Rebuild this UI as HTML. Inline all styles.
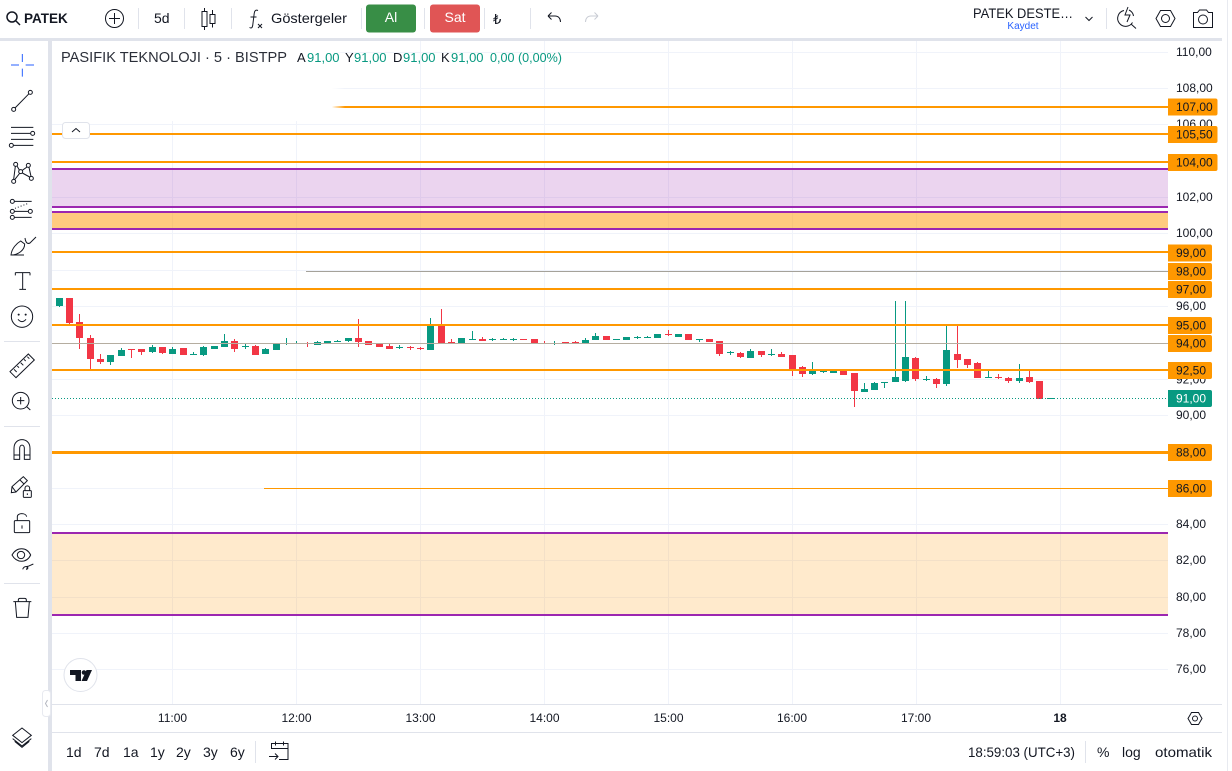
<!DOCTYPE html>
<html><head><meta charset="utf-8"><style>
html,body{margin:0;padding:0;background:#fff;width:1232px;height:771px;overflow:hidden}
svg{position:absolute;left:0;top:0;display:block}
text{font-family:"Liberation Sans",sans-serif;fill:#131722;font-size:12px}
.ax text{font-size:12px}
.gb{stroke:#089981;stroke-width:21;fill:none}
.gw{stroke:#089981;stroke-width:3;fill:none}
.rb{stroke:#f23645;stroke-width:21;fill:none}
.rw{stroke:#f23645;stroke-width:3;fill:none}
.ic{fill:none;stroke:#131722;stroke-width:3}
.i1{fill:none;stroke:#131722;stroke-width:1}
</style></head><body>
<svg width="1232" height="771" viewBox="0 0 1232 771">
<rect width="1232" height="771" fill="#fff"/>
<!-- bands -->
<rect x="0" y="38" width="1222" height="3" fill="#e0e3eb"/>
<rect x="48" y="41" width="4" height="730" fill="#e0e3eb"/>
<rect x="1227" y="0" width="1" height="771" fill="#e8eaf0"/>

<!-- chart grid -->
<g shape-rendering="crispEdges" fill="#f0f3fa">
<rect x="172" y="41" width="1" height="663"/><rect x="296" y="41" width="1" height="663"/><rect x="420" y="41" width="1" height="663"/><rect x="544" y="41" width="1" height="663"/><rect x="668" y="41" width="1" height="663"/><rect x="792" y="41" width="1" height="663"/><rect x="916" y="41" width="1" height="663"/><rect x="1060" y="41" width="1" height="663"/>
<rect x="52" y="52" width="1116" height="1"/><rect x="52" y="88" width="1116" height="1"/><rect x="52" y="124" width="1116" height="1"/><rect x="52" y="161" width="1116" height="1"/><rect x="52" y="197" width="1116" height="1"/><rect x="52" y="233" width="1116" height="1"/><rect x="52" y="270" width="1116" height="1"/><rect x="52" y="306" width="1116" height="1"/><rect x="52" y="343" width="1116" height="1"/><rect x="52" y="379" width="1116" height="1"/><rect x="52" y="415" width="1116" height="1"/><rect x="52" y="452" width="1116" height="1"/><rect x="52" y="488" width="1116" height="1"/><rect x="52" y="524" width="1116" height="1"/><rect x="52" y="560" width="1116" height="1"/><rect x="52" y="597" width="1116" height="1"/><rect x="52" y="633" width="1116" height="1"/><rect x="52" y="669" width="1116" height="1"/>
</g>
<!-- zones -->
<g shape-rendering="crispEdges">
<rect x="52" y="169" width="1116" height="38" fill="#9c27b0" fill-opacity=".2"/>
<rect x="52" y="212" width="1116" height="17" fill="#ff9800" fill-opacity=".5"/>
<rect x="52" y="533" width="1116" height="82" fill="#ff9800" fill-opacity=".2"/>
</g>

<!-- candles -->
<g shape-rendering="crispEdges">
<g transform="translate(50,290) scale(.33333)">
<path class="gw" d="M28.5 24V51M181.5 216V225M214.5 174V180M307.5 165V189M367.5 171V177M430.5 186V192M460.5 168V198M523.5 132V153M586.5 159V177M646.5 174V177M709.5 144V165M739.5 153V159M802.5 153V156M862.5 150V153"/>
<path class="gb" d="M28.5 24V48M181.5 195V216M214.5 180V198M307.5 171V186M367.5 177V192M430.5 192V195M460.5 171V195M493.5 168V177M523.5 153V171M586.5 168V171M646.5 177V192M679.5 159V180M709.5 159V162M739.5 159V162M802.5 156V165M832.5 153V162M862.5 153V156"/>
<path class="rw" d="M58.5 99V102M88.5 72V177M121.5 135V240M151.5 192V222M244.5 177V204M274.5 186V195M337.5 189V192M553.5 147V186M616.5 165V168M772.5 156V171"/>
<path class="rb" d="M58.5 24V99M88.5 96V144M121.5 144V207M151.5 207V216M244.5 177V180M274.5 177V186M337.5 171V189M400.5 174V195M553.5 153V177M616.5 168V195M772.5 159V162"/>
</g>
<g transform="translate(340,290) scale(.33333)">
<path class="gw" d="M25.5 144V156M178.5 165V177M271.5 84V180M397.5 123V150M457.5 144V153M490.5 144V150M520.5 144V153M643.5 153V165M736.5 144V162M766.5 129V150"/>
<path class="gb" d="M25.5 144V153M178.5 171V174M271.5 105V180M364.5 144V162M397.5 147V150M457.5 147V150M490.5 147V150M520.5 147V150M643.5 159V162M736.5 150V162M766.5 138V150M829.5 147V150M859.5 141V150"/>
<path class="rw" d="M55.5 87V171M148.5 162V177M211.5 168V180M241.5 171V180M304.5 57V162M334.5 147V162M427.5 141V153M613.5 153V162M676.5 156V162M706.5 153V162"/>
<path class="rb" d="M55.5 144V156M85.5 153V165M118.5 159V171M148.5 168V177M211.5 171V174M241.5 174V177M304.5 108V162M334.5 156V159M427.5 147V153M550.5 147V150M583.5 147V162M613.5 159V162M676.5 156V159M706.5 156V159M799.5 138V150"/>
</g>
<g transform="translate(630,290) scale(.33333)">
<path class="gw" d="M22.5 138V147M52.5 138V144M208.5 147V156M301.5 183V195M361.5 177V204M424.5 177V198M547.5 216V255M580.5 240V249M610.5 237V249"/>
<path class="gb" d="M22.5 141V144M52.5 141V144M82.5 132V144M145.5 132V141M208.5 147V150M301.5 186V189M361.5 183V204M424.5 192V195M547.5 240V252M580.5 243V246M610.5 240V249"/>
<path class="rw" d="M115.5 120V138M268.5 153V198M331.5 186V204M394.5 183V201M454.5 186V201M487.5 195V258M517.5 228V261M640.5 237V255M673.5 249V351"/>
<path class="rb" d="M115.5 132V135M175.5 132V150M238.5 147V156M268.5 153V192M331.5 189V201M394.5 183V195M454.5 192V201M487.5 195V237M517.5 231V252M640.5 240V255M673.5 249V303"/>
</g>
<g transform="translate(850,290) scale(.33333)">
<path class="gw" d="M43.5 279V306M73.5 276V300M103.5 276V294M136.5 33V276M166.5 33V276M229.5 258V273M289.5 105V288M415.5 243V264M508.5 222V279"/>
<path class="gb" d="M43.5 297V306M73.5 279V300M103.5 276V279M136.5 261V276M166.5 201V273M229.5 267V270M289.5 180V282M415.5 261V264M508.5 264V273M601.5 324V327"/>
<path class="rw" d="M13.5 249V351M196.5 201V273M259.5 264V294M322.5 105V234M352.5 207V234M382.5 216V264M445.5 252V267M475.5 261V279M538.5 237V279"/>
<path class="rb" d="M13.5 249V303M196.5 204V267M259.5 267V282M322.5 192V210M352.5 207V225M382.5 219V264M445.5 261V264M475.5 264V273M538.5 261V276M568.5 273V327"/>
</g>
</g>

<!-- horizontal lines -->
<defs><linearGradient id="fade" x1="0" x2="1" y1="0" y2="0"><stop offset="0" stop-color="#fff" stop-opacity="1"/><stop offset=".955" stop-color="#fff" stop-opacity="1"/><stop offset="1" stop-color="#fff" stop-opacity="0"/></linearGradient></defs>
<g shape-rendering="crispEdges">
<rect x="300" y="106" width="868" height="2" fill="#ff9800"/>
<rect x="52" y="133" width="1116" height="2" fill="#ff9800"/>
<rect x="52" y="161" width="1116" height="2" fill="#ff9800"/>
<rect x="52" y="168" width="1116" height="2" fill="#9c27b0"/>
<rect x="52" y="206" width="1116" height="2" fill="#9c27b0"/>
<rect x="52" y="211" width="1116" height="2" fill="#9c27b0"/>
<rect x="52" y="228" width="1116" height="2" fill="#9c27b0"/>
<rect x="52" y="251" width="1116" height="2" fill="#ff9800"/>
<rect x="306" y="271" width="862" height="1" fill="#a5a29a"/>
<rect x="52" y="288" width="1116" height="2" fill="#ff9800"/>
<rect x="52" y="324" width="1116" height="2" fill="#ff9800"/>
<rect x="52" y="343" width="1116" height="1" fill="#b5ada0"/>
<rect x="52" y="369" width="1116" height="2" fill="#ff9800"/>
<rect x="52" y="451" width="1116" height="3" fill="#ff9800"/>
<rect x="264" y="488" width="904" height="1" fill="#ff9800"/>
<rect x="52" y="532" width="1116" height="2" fill="#9c27b0"/>
<rect x="52" y="614" width="1116" height="2" fill="#9c27b0"/>
</g>
<path d="M52 398.5H1168" stroke="#089981" stroke-width="1" stroke-dasharray="1 2" fill="none"/>

<!-- legend fade overlay -->
<rect x="52" y="41" width="293" height="80" fill="url(#fade)"/>

<!-- legend -->
<text x="61" y="62" style="font-size:15px" fill-opacity=".9" textLength="226" lengthAdjust="spacingAndGlyphs">PASIFIK TEKNOLOJI · 5 · BISTPP</text>
<text x="297" y="62" style="font-size:13px">A</text><text x="307" y="62" style="font-size:13px;fill:#089981">91,00</text>
<text x="345" y="62" style="font-size:13px">Y</text><text x="354" y="62" style="font-size:13px;fill:#089981">91,00</text>
<text x="393" y="62" style="font-size:13px">D</text><text x="403" y="62" style="font-size:13px;fill:#089981">91,00</text>
<text x="441" y="62" style="font-size:13px">K</text><text x="451" y="62" style="font-size:13px;fill:#089981">91,00</text>
<text x="490" y="62" style="font-size:13px;fill:#089981" textLength="72" lengthAdjust="spacingAndGlyphs">0,00 (0,00%)</text>
<!-- collapse button -->
<rect x="62.5" y="122.5" width="27" height="16" rx="3" fill="#fff" stroke="#e0e3eb"/>
<path d="M72 132l4-3.500 4 3.500" fill="none" stroke="#131722" stroke-width="1"/>

<!-- price axis text -->
<g class="ax">
<text x="1176" y="56">110,00</text><text x="1176" y="92">108,00</text><text x="1176" y="128">106,00</text><text x="1176" y="201">102,00</text><text x="1176" y="237">100,00</text><text x="1176" y="310">96,00</text><text x="1176" y="383.500">92,00</text><text x="1176" y="419">90,00</text><text x="1176" y="528">84,00</text><text x="1176" y="564">82,00</text><text x="1176" y="601">80,00</text><text x="1176" y="637">78,00</text><text x="1176" y="673">76,00</text>
</g>
<!-- price labels -->
<g fill="#ff9800">
<path d="M1168 98.500h47.500q2 0 2 2v13q0 2-2 2h-47.500zM1168 126h47.500q2 0 2 2v13q0 2-2 2h-47.500zM1168 154h47.500q2 0 2 2v13q0 2-2 2h-47.500z"/>
<path d="M1168 244.500h42q2 0 2 2v13q0 2-2 2h-42zM1168 263h42q2 0 2 2v13q0 2-2 2h-42zM1168 281h42q2 0 2 2v13q0 2-2 2h-42zM1168 317h42q2 0 2 2v13q0 2-2 2h-42zM1168 335h42q2 0 2 2v13q0 2-2 2h-42zM1168 362h42q2 0 2 2v13q0 2-2 2h-42zM1168 444h42q2 0 2 2v13q0 2-2 2h-42zM1168 480h42q2 0 2 2v13q0 2-2 2h-42z"/>
<path d="M1168 390h42q2 0 2 2v13q0 2-2 2h-42z" fill="#089981"/>
</g>
<g class="ax">
<text x="1176" y="111">107,00</text><text x="1176" y="138.500">105,50</text><text x="1176" y="166.500">104,00</text><text x="1176" y="257">99,00</text><text x="1176" y="275.500">98,00</text><text x="1176" y="293.500">97,00</text><text x="1176" y="329.500">95,00</text><text x="1176" y="347.500">94,00</text><text x="1176" y="374.500">92,50</text><text x="1176" y="456.500">88,00</text><text x="1176" y="492.500">86,00</text>
<text x="1176" y="402.500" style="fill:#fff">91,00</text>
</g>

<!-- tv logo -->
<circle cx="80.500" cy="675" r="16.500" fill="#fff" stroke="#e0e3eb"/>
<path d="M70 670h11v11h-5.500v-6h-5.500zM92 670l-5 11h-5.500l5-11z" fill="#131722"/>
<circle cx="84" cy="672.500" r="2.300" fill="#131722"/>

<!-- time axis -->
<g shape-rendering="crispEdges" fill="#e0e3eb">
<rect x="52" y="704" width="1170" height="1"/><rect x="52" y="732" width="1170" height="1"/>
<rect x="255" y="741" width="1" height="22"/><rect x="1085" y="741" width="1" height="22"/>
</g>
<g text-anchor="middle">
<text x="172.500" y="722">11:00</text><text x="296.500" y="722">12:00</text><text x="420.500" y="722">13:00</text><text x="544.500" y="722">14:00</text><text x="668.500" y="722">15:00</text><text x="792" y="722">16:00</text><text x="916" y="722">17:00</text><text x="1060" y="722" style="font-weight:bold">18</text>
</g>
<path d="M1188 718.500l3.500-6h7l3.500 6-3.500 6h-7z" class="i1"/><circle cx="1195" cy="718.500" r="2.500" class="i1"/>

<!-- bottom bar -->
<text x="66" y="757" style="font-size:14px">1d</text><text x="94" y="757" style="font-size:14px">7d</text><text x="123" y="757" style="font-size:14px">1a</text><text x="150" y="757" style="font-size:14px">1y</text><text x="176" y="757" style="font-size:14px">2y</text><text x="203" y="757" style="font-size:14px">3y</text><text x="230" y="757" style="font-size:14px">6y</text>
<text x="968" y="757" style="font-size:14px" textLength="107" lengthAdjust="spacingAndGlyphs">18:59:03 (UTC+3)</text>
<text x="1097" y="757" style="font-size:14px">%</text><text x="1122" y="757" style="font-size:14px">log</text><text x="1155" y="757" style="font-size:14px" textLength="57" lengthAdjust="spacingAndGlyphs">otomatik</text>
<path class="i1" d="M271.500 749v-5.500h16.500v16h-9M275.500 741.500v4M283.500 741.500v4M271.500 748.500h16.500M269 756.500h9M275 753.500l3 3-3 3"/>

<!-- top toolbar -->
<g class="i1">
<circle cx="12" cy="17" r="5" style="stroke-width:1.500"/><path d="M16 21l4 4" style="stroke-width:1.500"/>
<circle cx="114.500" cy="18.500" r="9"/><path d="M114.500 13v11M109 18.500h11"/>
<path d="M204.500 8v4M204.500 26v4M202 11.500h5v15h-5zM212.500 10v4.500M212.500 23.500v4M210 14.500h5v9h-5z"/>
<path d="M258 10.500c-2-1-3.500 0-3.800 3l-1.500 12c-.4 2.500-1.500 3-3.200 2M250.500 17h6M258 24l4 4M262 24l-4 4"/>
<path d="M548 16h7c3.500 0 5.500 2.500 5.500 6M548 16l3.500-3.500M548 16l3.500 3.500"/>
<path d="M598 16h-7c-3.500 0-5.500 2.500-5.500 6M598 16l-3.500-3.500M598 16l-3.500 3.500" style="stroke:#c9ccd4"/>
</g>
<text x="24" y="23" style="font-size:13.500px;font-weight:bold">PATEK</text>
<text x="154" y="23" style="font-size:14px">5d</text>
<text x="271" y="23" style="font-size:14px" textLength="76" lengthAdjust="spacingAndGlyphs">Göstergeler</text>
<rect x="366" y="4.500" width="50" height="28" rx="3" fill="#388e46"/>
<rect x="430" y="4.500" width="50" height="28" rx="3" fill="#e05555"/>
<text x="391" y="22" text-anchor="middle" style="font-size:14px;fill:#fff">Al</text>
<text x="455" y="22" text-anchor="middle" style="font-size:14px;fill:#fff">Sat</text>
<text x="493" y="24" style="font-size:13px;font-family:'DejaVu Sans',sans-serif">₺</text>
<g shape-rendering="crispEdges" fill="#e0e3eb">
<rect x="138" y="8" width="1" height="21"/><rect x="184" y="8" width="1" height="21"/><rect x="231" y="8" width="1" height="21"/><rect x="361" y="8" width="1" height="21"/><rect x="424" y="8" width="1" height="21"/><rect x="484" y="8" width="1" height="21"/><rect x="530" y="8" width="1" height="21"/><rect x="1106" y="8" width="1" height="21"/>
</g>
<text x="973" y="18" style="font-size:14px" textLength="100" lengthAdjust="spacingAndGlyphs">PATEK DESTE…</text>
<text x="1023" y="29" text-anchor="middle" style="font-size:10px;fill:#2962ff">Kaydet</text>
<g class="i1">
<path d="M1085.500 17l3.500 3.500 3.500-3.500"/>
<path d="M1124 10.500a8 8 0 1 0 8.500 12M1131 24l5 4.500M1128 7l-3 8h5l-3 7M1129 10a8 8 0 0 1 4.500 6"/>
<path d="M1156 18.500l4.500-8h10l4.500 8-4.500 8h-10z"/><circle cx="1165.500" cy="18.500" r="4"/>
<path d="M1193.500 12.500h4l2-2.500h7l2 2.500h4v15h-19z"/><circle cx="1203" cy="19.500" r="4.500"/>
</g>

<!-- left toolbar -->
<g shape-rendering="crispEdges" fill="#e0e3eb">
<rect x="4" y="341" width="36" height="1"/><rect x="4" y="426" width="36" height="1"/><rect x="4" y="583" width="36" height="1"/>
</g>
<g transform="translate(0,40) scale(.33333)">
<path d="M67 42V66M67 86V110M33 75H57M77 75H102" fill="none" stroke="#2962ff" stroke-width="3"/>
<g class="ic">
<circle cx="41" cy="208" r="6"/><circle cx="91" cy="157" r="6"/><path d="M45 204L87 161"/>
<path d="M33 262H100M33 280H91M33 298H100M40 316H100"/><circle cx="98" cy="280" r="6"/><circle cx="34" cy="316" r="6"/>
<circle cx="47" cy="373" r="6"/><circle cx="85" cy="376" r="6"/><circle cx="62" cy="395" r="6"/><circle cx="41" cy="424" r="6"/><circle cx="94" cy="415" r="6"/>
<path d="M46 379L41 418M51 378L58 390M81 381L67 391M67 399L89 411M59 400L44 419M87 382L93 409"/>
<circle cx="37" cy="484" r="6"/><circle cx="37" cy="514" r="6"/><circle cx="37" cy="532" r="6"/><circle cx="91" cy="514" r="6"/>
<path d="M43 484H95M43 514H85M43 532H95"/><path d="M45 505L85 490" stroke-dasharray="3 6"/>
<path d="M33 645C35 625 50 610 62 603L74 612C74 630 55 645 33 645ZM33 645H72M75 594Q78 615 90 609L108 591"/>
<path d="M46 698H90M68 698V748M58 748H78M46 698V706M90 698V706"/>
<circle cx="66" cy="830" r="32"/><path d="M54 838Q66 852 78 838"/>
</g>
<circle cx="56" cy="824" r="3" fill="#131722"/><circle cx="77" cy="824" r="3" fill="#131722"/>
</g>
<g transform="translate(0,340) scale(.33333)">
<g class="ic">
<path d="M30 95L85 42L103 60L48 113ZM42 88L50 96M52 78L57 83M62 68L70 76M72 58L77 63M82 50L88 56"/>
<circle cx="62" cy="182" r="25"/><path d="M62 171V193M51 182H73M80 200L91 210"/>
<path d="M42 358V325C42 290 90 290 90 325V358H73V325C73 312 59 312 59 325V358ZM42 345H59M73 345H90"/>
<path d="M34 458L36 440L70 410L82 422L48 456ZM60 420L72 432M36 440L48 456"/>
<rect x="70" y="452" width="24" height="20" rx="2"/><path d="M75 452V445C75 435 89 435 89 445V452M82 460V465"/>
<rect x="43" y="542" width="46" height="36" rx="3"/><path d="M52 542V530C52 518 78 518 80 530M66 556V566"/>
<path d="M36 645C50 620 80 620 92 645C80 670 50 670 36 645Z"/><circle cx="63" cy="645" r="11"/>
<path d="M68 688Q72 678 82 680L100 672M82 680Q86 686 80 688Z"/>
<path d="M40 785H94M55 785V780Q55 775 60 775H74Q79 775 79 780V785M46 785L50 832H84L88 785"/>
<path d="M66 1164L94 1186L66 1208L38 1186ZM38 1196L66 1218L94 1196M44 1204L66 1222L88 1204"/>
</g>
</g>
<!-- collapse handle -->
<rect x="42.500" y="690.500" width="8" height="26" rx="3" fill="#fff" stroke="#e8eaf0"/>
<path d="M47.500 700l-2 3.500 2 3.500" fill="none" stroke="#b2b5be"/>
</svg>
</body></html>
